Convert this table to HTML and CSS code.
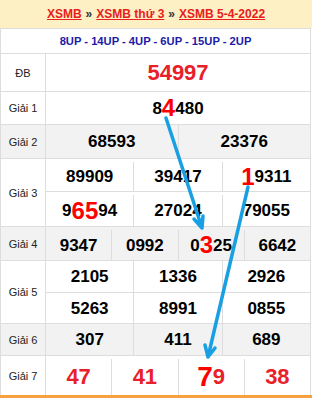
FILE: index.html
```html
<!DOCTYPE html>
<html lang="vi">
<head>
<meta charset="utf-8">
<title>XSMB 5-4-2022</title>
<link rel="stylesheet" href="styles.css">
</head>
<body>
<div class="page">
  <div class="head"><a href="#">XSMB</a> » <a href="#">XSMB thứ 3</a> » <a href="#">XSMB 5-4-2022</a></div>
  <div class="tbl">
    <div class="up">8UP - 14UP - 4UP - 6UP - 15UP - 2UP</div>

    <div class="row r-db">
      <div class="lbl">ĐB</div>
      <div class="vals"><div class="c db">54997</div></div>
    </div>

    <div class="row r-g1">
      <div class="lbl">Giải 1</div>
      <div class="vals"><div class="c">8<span class="hl">4</span>480</div></div>
    </div>

    <div class="row r-g2 grey">
      <div class="lbl">Giải 2</div>
      <div class="vals"><div class="c">68593</div><div class="c">23376</div></div>
    </div>

    <div class="row r-g3">
      <div class="lbl">Giải 3</div>
      <div class="stack">
        <div class="vals sub s1 gap"><div class="c">89909</div><div class="c">39417</div><div class="c"><span class="hl">1</span>9311</div></div>
        <div class="vals sub s2 gap"><div class="c">9<span class="hl">65</span>94</div><div class="c">27024</div><div class="c">79055</div></div>
      </div>
    </div>

    <div class="row r-g4 grey">
      <div class="lbl">Giải 4</div>
      <div class="vals gap"><div class="c">9347</div><div class="c">0992</div><div class="c">0<span class="hl">3</span>25</div><div class="c">6642</div></div>
    </div>

    <div class="row r-g5">
      <div class="lbl">Giải 5</div>
      <div class="stack">
        <div class="vals sub s3"><div class="c">2105</div><div class="c">1336</div><div class="c">2926</div></div>
        <div class="vals sub s4"><div class="c">5263</div><div class="c">8991</div><div class="c">0855</div></div>
      </div>
    </div>

    <div class="row r-g6 grey">
      <div class="lbl">Giải 6</div>
      <div class="vals"><div class="c">307</div><div class="c">411</div><div class="c">689</div></div>
    </div>

    <div class="row r-g7">
      <div class="lbl">Giải 7</div>
      <div class="vals gap g7"><div class="c">47</div><div class="c">41</div><div class="c"><span class="hl7">7</span>9</div><div class="c">38</div></div>
    </div>
  </div>
  <div class="foot"></div>

  <svg class="arrows" width="312" height="398" viewBox="0 0 312 398" aria-hidden="true">
    <g stroke="#19a0e3" stroke-width="3.5" stroke-linecap="round" stroke-linejoin="round" fill="none">
      <path d="M166 118 L202 228 M194 219 L202 228 L203 216"/>
      <path d="M248 187 L208 357 M205 345 L208 357 L215 348"/>
    </g>
  </svg>
</div>
</body>
</html>
```
FILE: styles.css
```css
* { box-sizing: border-box; margin: 0; padding: 0; }

body {
  margin: 0;
  background: #fff;
  font-family: "Liberation Sans", Arial, sans-serif;
  color: #000;
}

.page {
  position: relative;
  width: 312px;
  height: 398px;
  overflow: hidden;
}

.head {
  height: 28px;
  background: #fcf0c4;
  display: flex;
  align-items: center;
  justify-content: center;
  gap: 4px;
  font-size: 12px;
  font-weight: bold;
  color: #333;
}

.head a {
  color: #e8201c;
  text-decoration: underline;
}

.tbl {
  width: 311px;
  border-top: 1px solid #ddd;
  border-left: 1px solid #ddd;
  border-right: 1px solid #ddd;
}

.up {
  height: 25px;
  border-bottom: 1px solid #ddd;
  display: flex;
  align-items: center;
  justify-content: center;
  font-size: 11.2px;
  font-weight: bold;
  color: #1b1ba8;
}

.row {
  display: grid;
  grid-template-columns: 45px 1fr;
  border-bottom: 1px solid #ddd;
}

.grey { background: #f2f2f2; }

.lbl {
  border-right: 1px solid #ddd;
  display: flex;
  align-items: center;
  justify-content: center;
  font-size: 11px;
  color: #222;
}

.vals {
  display: flex;
}

.stack {
  display: flex;
  flex-direction: column;
}

.sub { flex: none; }
.s1 { height: 33px; border-bottom: 1px solid #ddd; }
.s2 { height: 34px; }
.s3 { height: 32px; border-bottom: 1px solid #ddd; }
.s4 { height: 30px; }

.c {
  flex: 1 1 0;
  display: flex;
  align-items: center;
  justify-content: center;
  font-size: 17px;
  font-weight: bold;
  line-height: 1;
}

.c + .c { border-left: 1px solid #ddd; }

.gap .c { margin-top: 3px; }

.r-db { height: 38px; }
.r-g1 { height: 33px; }
.r-g2 { height: 34px; }
.r-g3 { height: 68px; }
.r-g4 { height: 34px; }
.r-g5 { height: 63px; }
.r-g6 { height: 32px; }
.r-g7 { height: 39px; border-bottom: none; }

.db {
  font-size: 22px;
  color: #e8202a;
}

.hl {
  font-size: 24px;
  color: #ff0000;
  line-height: 1;
}

.g7 .c {
  font-size: 22px;
  color: #e8202a;
}

.hl7 {
  font-size: 28px;
  color: #ff0000;
  line-height: 1;
}

.foot {
  height: 3px;
  background: #f7a23e;
}

.arrows {
  position: absolute;
  left: 0;
  top: 0;
  pointer-events: none;
}
```
